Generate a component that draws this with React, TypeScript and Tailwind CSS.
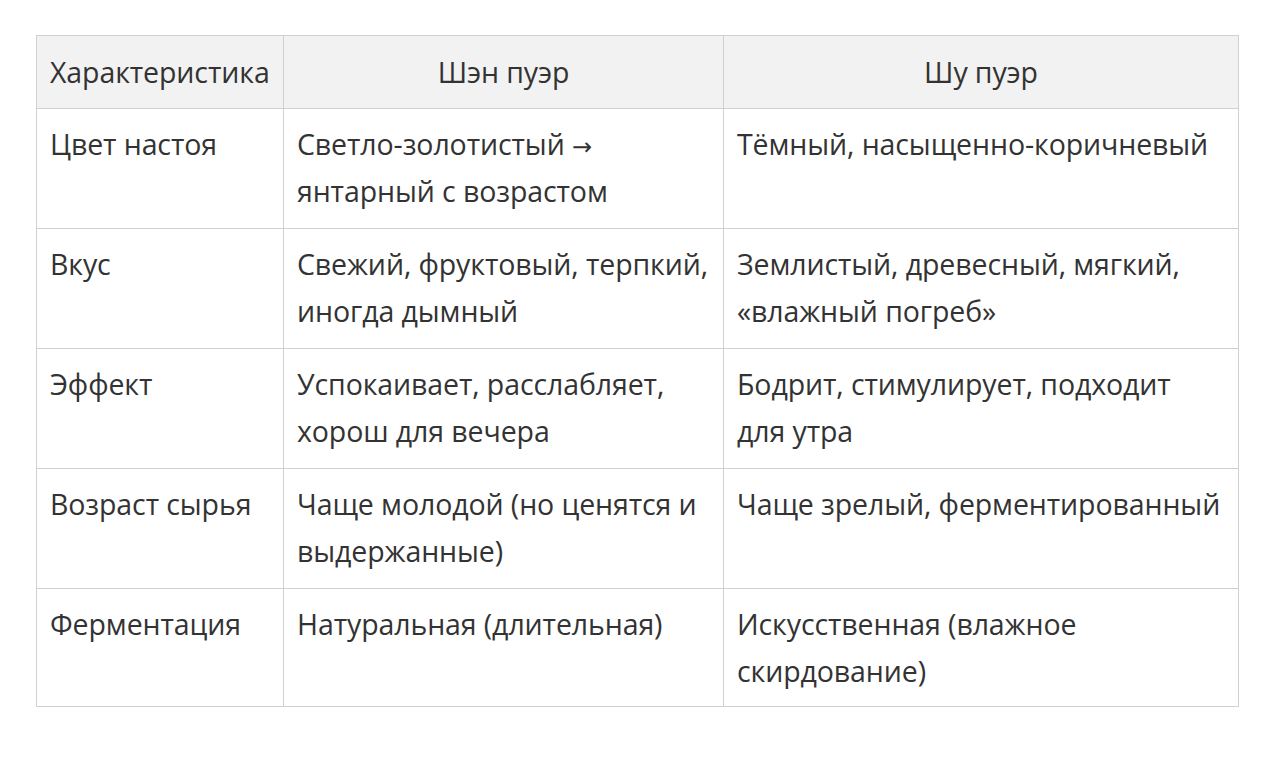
import React from 'react';

const rows: [React.ReactNode, React.ReactNode, React.ReactNode][] = [
  [
    'Цвет настоя',
    <>
      Светло-золотистый <span className="font-['DejaVu_Sans',sans-serif] text-[24px] leading-none">→</span> янтарный с возрастом
    </>,
    'Тёмный, насыщенно-коричневый',
  ],
  ['Вкус', 'Свежий, фруктовый, терпкий, иногда дымный', 'Землистый, древесный, мягкий, «влажный погреб»'],
  ['Эффект', 'Успокаивает, расслабляет, хорош для вечера', 'Бодрит, стимулирует, подходит для утра'],
  ['Возраст сырья', 'Чаще молодой (но ценятся и выдержанные)', 'Чаще зрелый, ферментированный'],
  ['Ферментация', 'Натуральная (длительная)', 'Искусственная (влажное скирдование)'],
];

const App: React.FC = () => {
  return (
    <div className="min-h-screen bg-white pt-[35px] pl-[36px] font-['Open_Sans',sans-serif] text-[#333]">
      <table className="w-[1202px] table-fixed border-collapse text-[28.5px] leading-[47px] tracking-[-0.1px]">
        <colgroup>
          <col className="w-[247px]" />
          <col className="w-[440px]" />
          <col className="w-[515px]" />
        </colgroup>
        <thead>
          <tr className="bg-[#f2f2f2]">
            <th className="h-[73px] border border-[#d0d0d0] px-[13px] py-0 text-left font-normal">Характеристика</th>
            <th className="h-[73px] border border-[#d0d0d0] px-[13px] py-0 text-center font-normal">Шэн пуэр</th>
            <th className="h-[73px] border border-[#d0d0d0] px-[13px] py-0 text-center font-normal">Шу пуэр</th>
          </tr>
        </thead>
        <tbody>
          {rows.map((r, ri) => (
            <tr key={ri} className={ri === rows.length - 1 ? 'h-[118px]' : 'h-[120px]'}>
              {r.map((c, i) => (
                <td key={i} className="border border-[#d0d0d0] px-[13px] pt-[12px] pb-0 align-top">
                  {c}
                </td>
              ))}
            </tr>
          ))}
        </tbody>
      </table>
    </div>
  );
};

export default App;
